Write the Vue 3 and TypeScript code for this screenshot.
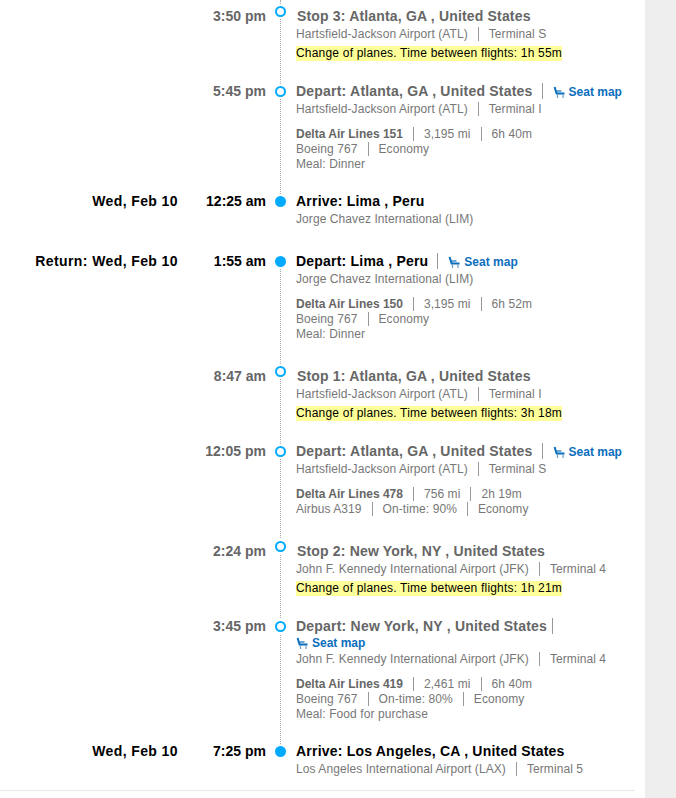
<script setup lang="ts">
interface Stop {
  date?: string
  time: string
  kind: 'stop' | 'depart' | 'arrive'
  strong?: boolean
  title: string
  seat?: boolean
  seatWrap?: boolean
  airport: string[]
  note?: string
  flight?: string[][]
}

const legs: Stop[][] = [
  [
    {
      time: '3:50 pm',
      kind: 'stop',
      title: 'Stop 3: Atlanta, GA , United States',
      airport: ['Hartsfield-Jackson Airport (ATL)', 'Terminal S'],
      note: 'Change of planes. Time between flights: 1h 55m'
    },
    {
      time: '5:45 pm',
      kind: 'depart',
      title: 'Depart: Atlanta, GA , United States',
      seat: true,
      airport: ['Hartsfield-Jackson Airport (ATL)', 'Terminal I'],
      flight: [['Delta Air Lines 151', '3,195 mi', '6h 40m'], ['Boeing 767', 'Economy'], ['Meal: Dinner']]
    },
    {
      date: 'Wed, Feb 10',
      time: '12:25 am',
      kind: 'arrive',
      strong: true,
      title: 'Arrive: Lima , Peru',
      airport: ['Jorge Chavez International (LIM)']
    }
  ],
  [
    {
      date: 'Return: Wed, Feb 10',
      time: '1:55 am',
      kind: 'depart',
      strong: true,
      title: 'Depart: Lima , Peru',
      seat: true,
      airport: ['Jorge Chavez International (LIM)'],
      flight: [['Delta Air Lines 150', '3,195 mi', '6h 52m'], ['Boeing 767', 'Economy'], ['Meal: Dinner']]
    },
    {
      time: '8:47 am',
      kind: 'stop',
      title: 'Stop 1: Atlanta, GA , United States',
      airport: ['Hartsfield-Jackson Airport (ATL)', 'Terminal I'],
      note: 'Change of planes. Time between flights: 3h 18m'
    },
    {
      time: '12:05 pm',
      kind: 'depart',
      title: 'Depart: Atlanta, GA , United States',
      seat: true,
      airport: ['Hartsfield-Jackson Airport (ATL)', 'Terminal S'],
      flight: [['Delta Air Lines 478', '756 mi', '2h 19m'], ['Airbus A319', 'On-time: 90%', 'Economy']]
    },
    {
      time: '2:24 pm',
      kind: 'stop',
      title: 'Stop 2: New York, NY , United States',
      airport: ['John F. Kennedy International Airport (JFK)', 'Terminal 4'],
      note: 'Change of planes. Time between flights: 1h 21m'
    },
    {
      time: '3:45 pm',
      kind: 'depart',
      title: 'Depart: New York, NY , United States',
      seat: true,
      seatWrap: true,
      airport: ['John F. Kennedy International Airport (JFK)', 'Terminal 4'],
      flight: [['Delta Air Lines 419', '2,461 mi', '6h 40m'], ['Boeing 767', 'On-time: 80%', 'Economy'], ['Meal: Food for purchase']]
    },
    {
      date: 'Wed, Feb 10',
      time: '7:25 pm',
      kind: 'arrive',
      strong: true,
      title: 'Arrive: Los Angeles, CA , United States',
      airport: ['Los Angeles International Airport (LAX)', 'Terminal 5']
    }
  ]
]
</script>

<template>
  <div class="page">
    <main class="itinerary">
      <section v-for="(leg, i) in legs" :key="i" class="leg">
        <div v-for="row in leg" :key="row.time" class="row" :class="[row.kind, { strong: row.strong }]">
          <div class="date">{{ row.date }}</div>
          <div class="time">{{ row.time }}</div>
          <div class="rail"><span class="dot"></span></div>
          <div class="detail">
            <div class="head" :class="{ wrap: row.seatWrap }">
              <span class="title">{{ row.title }}</span>
              <a v-if="row.seat" class="seat" href="#" @click.prevent>
                <svg width="13" height="13" viewBox="0 0 13 13" aria-hidden="true">
                  <path d="M1.6 1 L3.6 7.6 H11.5" fill="none" stroke="#0a6ebd" stroke-width="2" />
                  <path d="M4 5 H8.5" fill="none" stroke="#0a6ebd" stroke-width="1.2" />
                  <path d="M4.5 8.5 V12 M10 8.5 V12" fill="none" stroke="#6d9cc4" stroke-width="1.2" />
                </svg>
                Seat map
              </a>
            </div>
            <div class="line">
              <span v-for="part in row.airport" :key="part" class="part">{{ part }}</span>
            </div>
            <div v-if="row.note" class="note"><mark>{{ row.note }}</mark></div>
            <div v-if="row.flight" class="flight">
              <div v-for="(parts, n) in row.flight" :key="n" class="line">
                <span v-for="part in parts" :key="part" class="part">{{ part }}</span>
              </div>
            </div>
          </div>
        </div>
      </section>
      <div class="rule"></div>
    </main>
    <aside class="side"></aside>
  </div>
</template>

<style scoped>
.page {
  display: flex;
  height: 798px;
  overflow: hidden;
  font-family: "Liberation Sans", Arial, sans-serif;
  font-size: 12px;
  color: #777;
  background: #fff;
}

.itinerary {
  width: 645px;
  padding-top: 3px;
  box-sizing: border-box;
}

.side {
  flex: 1;
  background: #eeeeee;
}

.leg {
  position: relative;
  margin-bottom: 27px;
}

.leg::before {
  content: '';
  position: absolute;
  left: 280px;
  top: 9px;
  bottom: 24px;
  border-left: 1px dotted #aaa;
}

.leg:first-child::before {
  top: -3px;
}

.row {
  display: grid;
  grid-template-columns: 178px 88px 30px 339px;
  margin-bottom: 22px;
}

.row:last-child {
  margin-bottom: 0;
}

.date,
.time {
  text-align: right;
  font-size: 14px;
  font-weight: 700;
  line-height: 16px;
  color: #666;
}

.date {
  letter-spacing: 0.4px;
}

.strong .date,
.strong .time,
.strong .title {
  color: #000;
}

.stop .time,
.stop .detail {
  padding-top: 5px;
}

.stop .title {
  margin-left: 1px;
  letter-spacing: 0.17px;
}

.rail {
  position: relative;
  z-index: 1;
  padding-top: 3px;
  display: flex;
  justify-content: center;
  align-items: flex-start;
}

.dot {
  width: 11px;
  height: 11px;
  box-sizing: border-box;
  border-radius: 50%;
  border: 2px solid #0af;
  background: #fff;
  margin-left: -1px;
  box-shadow: 0 0 0 2px #fff;
}

.strong .dot {
  background: #0af;
}

.head {
  display: flex;
  flex-wrap: wrap;
  align-items: flex-start;
  min-height: 18px;
  line-height: 18px;
}

.title {
  font-size: 14px;
  font-weight: 700;
  color: #666;
  letter-spacing: 0.21px;
  padding-right: 9px;
  border-right: 1px solid #999;
  line-height: 16px;
  margin-right: 10px;
}

.head .title:last-child {
  border-right: 0;
}

.head.wrap .title {
  padding-right: 5px;
  margin-bottom: 2px;
}

.seat {
  display: inline-flex;
  align-items: center;
  gap: 3px;
  color: #0a6ebd;
  font-weight: 700;
  text-decoration: none;
}

.head.wrap .seat {
  width: 100%;
  height: 15px;
  line-height: 15px;
}

.line {
  line-height: 15px;
  display: flex;
}

.part {
  display: inline-block;
  line-height: 14px;
  margin: 0.5px 0;
  letter-spacing: 0.08px;
}

.part + .part {
  margin-left: 10px;
  padding-left: 10px;
  border-left: 1px solid #999;
}

.note {
  margin-top: 5px;
  line-height: 15px;
}

mark {
  background: #ffff99;
  color: #000;
  display: inline-block;
  letter-spacing: 0.2px;
}

.flight {
  margin-top: 10px;
}

.flight .line:first-child .part:first-child {
  font-weight: 700;
  color: #666;
  letter-spacing: 0;
}

.rule {
  width: 635px;
  margin-top: -13px;
  border-top: 1px solid #e8e8e8;
}
</style>
